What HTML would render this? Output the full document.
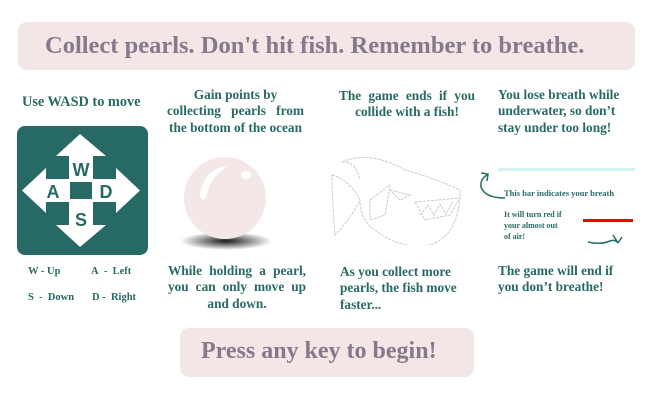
<!DOCTYPE html>
<html><head><style>
body{margin:0;width:651px;height:401px;background:#fff;position:relative;overflow:hidden;font-family:"Liberation Serif",serif;font-weight:bold;color:#276a62}
.a{position:absolute}
.ban{background:#f3e6e6;border-radius:9px;color:#86798c;font-size:24.5px}
.t{font-size:13.3px;line-height:16.3px}
.j{text-align:justify;text-align-last:justify}
</style></head><body>
<div class="a ban" style="left:18px;top:22px;width:617px;height:48px"><span class="a" style="left:27px;top:10px;white-space:nowrap">Collect pearls. Don't hit fish. Remember to breathe.</span></div>
<div class="a ban" style="left:180px;top:328px;width:294px;height:49px;font-size:24px"><span class="a" style="left:21px;top:10px;white-space:nowrap">Press any key to begin!</span></div>

<div class="a t" style="left:22px;top:94px;font-size:14.3px">Use WASD to move</div>
<div class="a" style="left:17px;top:126px;width:131px;height:129px;background:#276a65;border-radius:8px"></div>
<svg class="a" style="left:17px;top:126px" width="131" height="129" viewBox="0 0 131 129">
<g fill="#fff">
<polygon points="63,8 39,30 52,30 52,56 76,56 76,30 89,30"/>
<polygon points="63,121 39,99 52,99 52,73 76,73 76,99 89,99"/>
<polygon points="5,64.5 29,42 29,53 53,53 53,76 29,76 29,87"/>
<polygon points="123,64.5 99,42 99,53 75,53 75,76 99,76 99,87"/>
</g>
<g fill="#276a65" font-family="Liberation Sans,sans-serif" font-weight="bold" font-size="18" text-anchor="middle">
<text x="64" y="50">W</text><text x="36" y="72">A</text><text x="89" y="72">D</text><text x="64" y="100">S</text>
</g></svg>
<div class="a" style="left:28px;top:266px;font-size:10.5px">W - Up</div>
<div class="a" style="left:91px;top:266px;font-size:10.5px">A&nbsp; - &nbsp;Left</div>
<div class="a" style="left:28px;top:292px;font-size:10.5px">S&nbsp; - &nbsp;Down</div>
<div class="a" style="left:92px;top:292px;font-size:10.5px">D - &nbsp;Right</div>

<div class="a t" style="left:167px;top:87px;width:137px;text-align:center"><div>Gain points by</div><div class="j">collecting pearls from</div><div>the bottom of the ocean</div></div>
<svg class="a" style="left:170px;top:150px" width="110" height="105">
<defs><radialGradient id="g" cx="0.5" cy="0.5" r="0.5"><stop offset="0" stop-color="#000" stop-opacity=".9"/><stop offset="1" stop-color="#000" stop-opacity="0"/></radialGradient></defs>
<ellipse cx="56" cy="91" rx="46" ry="9" fill="url(#g)"/>
<circle cx="55" cy="48" r="41" fill="#f4e7e7"/>
<path d="M30 45 Q32 20 60 15 Q40 25 36 48 Q32 52 30 45Z" fill="#fff"/>
<ellipse cx="76" cy="25" rx="5" ry="4" fill="#fff"/>
</svg>
<div class="a t" style="left:168px;top:263px;width:138px;text-align:center"><div class="j">While holding a pearl,</div><div class="j">you can only move up</div><div>and down.</div></div>

<div class="a t" style="left:339px;top:88px;width:136px;text-align:center"><div class="j">The game ends if you</div><div>collide with a fish!</div></div>
<svg class="a" style="left:330px;top:140px" width="140" height="105" fill="none" stroke="#ccc" stroke-width="1" stroke-dasharray="3 1">
<path d="M2 35 Q20 40 30 60 Q20 80 5 95 Q2 60 2 35Z"/>
<path d="M12 22 Q40 10 75 30 Q110 40 130 50 Q130 95 100 105 Q70 110 45 90 Q30 80 30 60"/>
<path d="M12 22 Q25 20 30 40"/>
<path d="M85 62 L130 58 L120 75 L95 80 Z"/>
<path d="M90 75 L98 65 L104 75 L110 64 L116 74 L122 62"/>
<path d="M60 50 L80 55 L70 60Z"/>
<path d="M40 60 L60 45 L55 75 L40 80Z"/>
</svg>
<div class="a t" style="left:340px;top:264px;width:135px"><div>As you collect more</div><div>pearls, the fish move</div><div>faster...</div></div>

<div class="a t" style="left:498px;top:87px;width:135px"><div>You lose breath while</div><div>underwater, so don’t</div><div>stay under too long!</div></div>
<div class="a" style="left:498px;top:168px;width:137px;height:3px;background:#d4f1f3"></div>
<svg class="a" style="left:475px;top:165px" width="160" height="80" fill="none" stroke="#276a62" stroke-width="1.5">
<path d="M30 33 Q10 33 6 22 Q5 14 12 10 M6 8 L13 9 L12 16"/>
<path d="M113 77 Q125 80 135 76 Q140 74 143 78 M138 70 L143 78 M147 72 L143 78"/>
</svg>
<div class="a" style="left:504px;top:188px;font-size:8.5px">This bar indicates your breath</div>
<div class="a" style="left:504px;top:209px;font-size:8px;line-height:11px">It will turn red if<br>your almost out<br>of air!</div>
<div class="a" style="left:583px;top:219px;width:50px;height:3px;background:#f00"></div>
<div class="a t" style="left:498px;top:263px;width:135px"><div>The game will end if</div><div>you don’t breathe!</div></div>
</body></html>
